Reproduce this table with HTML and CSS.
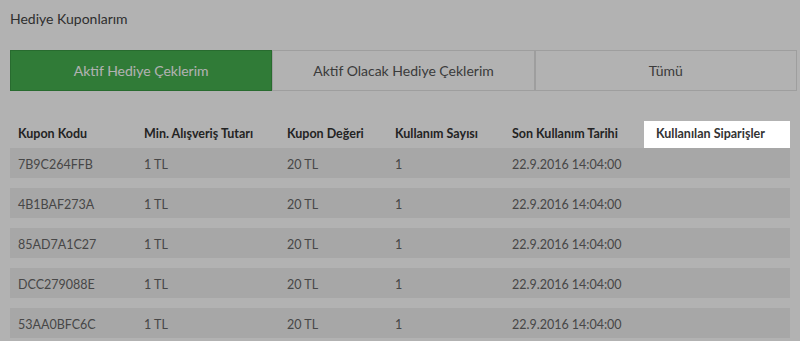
FILE: index.html
```html
<!DOCTYPE html>
<html lang="tr">
<head>
<meta charset="utf-8">
<title>Hediye Kuponlarım</title>
<link rel="stylesheet" href="styles.css">
</head>
<body>
<main class="coupons">
  <h1 class="coupons-title">Hediye Kuponlarım</h1>

  <nav class="tabs">
    <a class="tab tab-active" href="#">Aktif Hediye Çeklerim</a>
    <a class="tab" href="#">Aktif Olacak Hediye Çeklerim</a>
    <a class="tab" href="#">Tümü</a>
  </nav>

  <table class="coupon-table">
    <colgroup>
      <col class="c-code"><col class="c-min"><col class="c-value"><col class="c-count"><col class="c-date"><col class="c-orders">
    </colgroup>
    <thead>
      <tr>
        <th>Kupon Kodu</th>
        <th>Min. Alışveriş Tutarı</th>
        <th>Kupon Değeri</th>
        <th>Kullanım Sayısı</th>
        <th>Son Kullanım Tarihi</th>
        <th class="spotlight">Kullanılan Siparişler</th>
      </tr>
    </thead>
    <tbody>
      <tr><td>7B9C264FFB</td><td>1 TL</td><td>20 TL</td><td>1</td><td>22.9.2016 14:04:00</td><td></td></tr>
      <tr><td>4B1BAF273A</td><td>1 TL</td><td>20 TL</td><td>1</td><td>22.9.2016 14:04:00</td><td></td></tr>
      <tr><td>85AD7A1C27</td><td>1 TL</td><td>20 TL</td><td>1</td><td>22.9.2016 14:04:00</td><td></td></tr>
      <tr><td>DCC279088E</td><td>1 TL</td><td>20 TL</td><td>1</td><td>22.9.2016 14:04:00</td><td></td></tr>
      <tr><td>53AA0BFC6C</td><td>1 TL</td><td>20 TL</td><td>1</td><td>22.9.2016 14:04:00</td><td></td></tr>
    </tbody>
  </table>
</main>

<!-- dimmed backdrop for the guided tour; the spotlighted header sits above it -->
<div class="tour-backdrop"></div>
</body>
</html>
```

FILE: styles.css
```css
* {
  box-sizing: border-box;
}

html, body {
  margin: 0;
  padding: 0;
  background: #ffffff;
  overflow: hidden;
}

body {
  font-family: Lato, "Open Sans", "Liberation Sans", sans-serif;
  color: #444;
}

.coupons {
  padding: 10px 3px 0 10px;
}

.coupons-title {
  margin: 0;
  font-size: 14px;
  font-weight: 400;
  line-height: 18px;
  color: #444;
}

/* tab strip */
.tabs {
  display: flex;
  margin-top: 22px;
}

.tab {
  flex: 1 1 0;
  height: 41px;
  display: flex;
  align-items: center;
  justify-content: center;
  border: 1px solid #e2e2e2;
  font-size: 14px;
  color: #555;
  text-decoration: none;
  background: #fff;
}

.tab-active {
  background: #46b050;
  border-color: #3a9a44;
  color: #fff;
}

/* coupon table */
.coupon-table {
  margin-top: 30px;
  width: 780px;
  table-layout: fixed;
  border-collapse: separate;
  border-spacing: 0;
  font-size: 12.5px;
}

.c-code   { width: 126px; }
.c-min    { width: 143px; }
.c-value  { width: 108px; }
.c-count  { width: 117px; }
.c-date   { width: 140px; }
.c-orders { width: 146px; }

.coupon-table th {
  padding: 0 8px 1px;
  line-height: 26px;
  text-align: left;
  font-weight: 700;
  color: #333;
  white-space: nowrap;
}

.coupon-table th.spotlight {
  padding-left: 12px;
  background: #fff;
  position: relative;
  z-index: 2;
}

.coupon-table td {
  padding: 4px 8px 0;
  line-height: 26px;
  background: #f0f0f0;
  color: #666;
  white-space: nowrap;
}

.coupon-table tbody tr + tr td {
  border-top: 10px solid #fff;
  background-clip: padding-box;
}

.tour-backdrop {
  position: fixed;
  inset: 0;
  background: rgba(0, 0, 0, 0.3);
  z-index: 1;
}
```
